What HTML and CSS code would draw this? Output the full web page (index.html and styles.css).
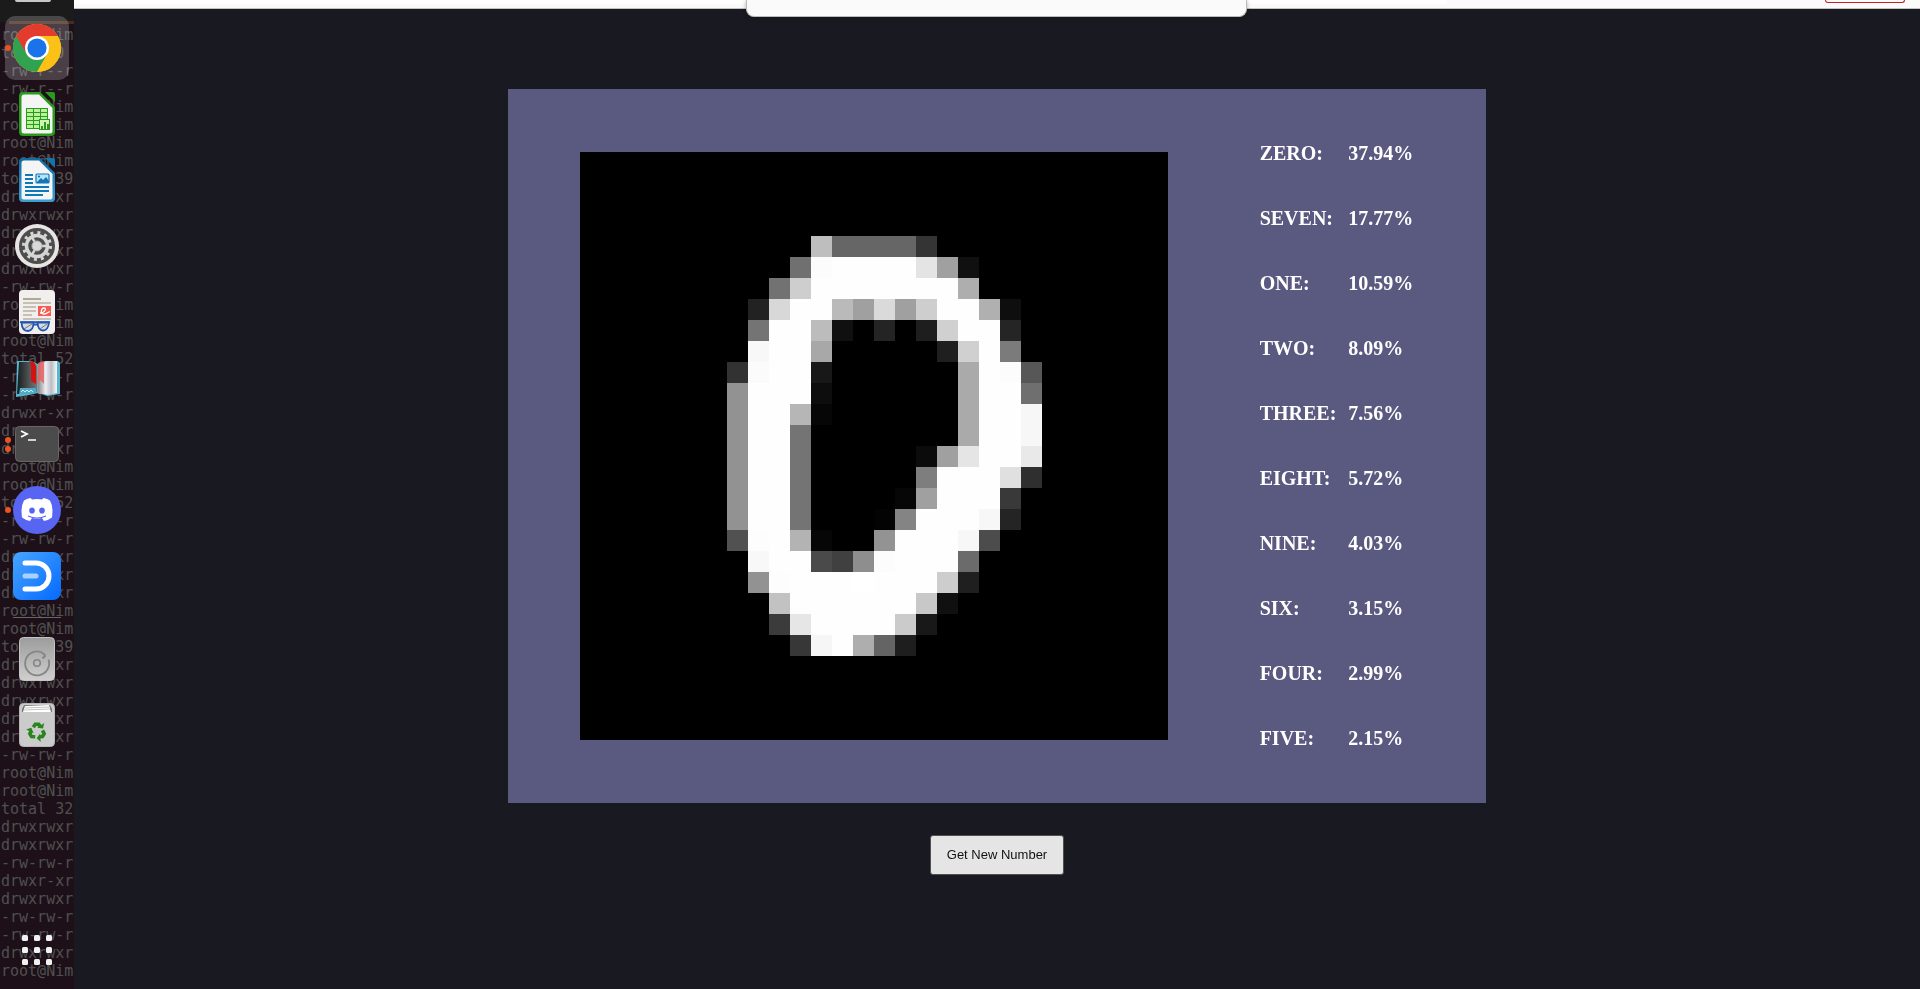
FILE: index.html
```html
<!DOCTYPE html>
<html lang="en">
<head>
<meta charset="utf-8">
<title>Digit Recognizer</title>
<link rel="stylesheet" href="styles.css">
</head>
<body>
<div class="desktop">
  <nav class="dock" aria-label="Dock">
<pre class="terminal" aria-hidden="true">root@Nim
total 0
-rw-r--r
-rw-r--r
root@Nim
root@Nim
root@Nim
root@Nim
total 39
drwxrwxr
drwxrwxr
drwxrwxr
drwxrwxr
drwxrwxr
-rw-rw-r
root@Nim
root@Nim
root@Nim
total 52
-rw-rw-r
-rw-rw-r
drwxr-xr
drwxr-xr
drwxr-xr
root@Nim
root@Nim
total 52
-rw-rw-r
-rw-rw-r
drwxrwxr
drwxrwxr
drwxrwxr
root@Nim
root@Nim
total 39
drwxrwxr
drwxrwxr
drwxrwxr
drwxrwxr
drwxrwxr
-rw-rw-r
root@Nim
root@Nim
total 32
drwxrwxr
drwxrwxr
-rw-rw-r
drwxr-xr
drwxrwxr
-rw-rw-r
-rw-rw-r
drwxrwxr
root@Nim</pre>
    <div class="dock-items">
      <button class="app active" aria-label="Chrome">
        <svg viewBox="0 0 48 48"><circle cx="24" cy="24" r="24" fill="#fbc116"/><path d="M24 24 3.2 12A24 24 0 0 0 24 48L34.4 30z" fill="#31a350"/><path d="M24 24L13.6 30 3.2 12A24 24 0 0 1 44.8 12H24z" fill="#e33b2e"/><path d="M24 12h20.8A24 24 0 0 1 24 48l10.4-18z" fill="#fbc116"/><circle cx="24" cy="24" r="12" fill="#fff"/><circle cx="24" cy="24" r="9.6" fill="#1a73e8"/></svg>
        <span class="dots"><i></i></span>
      </button>
      <button class="app" aria-label="Calc">
        <svg viewBox="0 0 48 48"><path d="M10 2h17l15 15v25a4 4 0 0 1-4 4H10a4 4 0 0 1-4-4V6a4 4 0 0 1 4-4z" fill="#2a9a1c"/><path d="M32 2h8a2 2 0 0 1 2 2v8z" fill="#2a9a1c"/><path d="M11 4.500h15L39.500 18v23a2.500 2.500 0 0 1-2.500 2.500H11A2.500 2.500 0 0 1 8.500 41V7A2.500 2.500 0 0 1 11 4.500z" fill="#f5f5f5"/><path d="M13 18h22v21H13z" fill="#2a9a1c"/><path d="M14 19h6v3h-6zm7 0h6v3h-6zm7 0h6v3h-6zM14 23h6v3h-6zm7 0h6v3h-6zm7 0h6v3h-6zM14 27h6v3h-6zm7 0h6v3h-6zm7 0h6v3h-6zM14 31h6v3h-6zm7 0h6v3h-6zM14 35h6v3h-6zm7 0h6v3h-6z" fill="#b8f29a"/><rect x="26.500" y="29.500" width="10" height="10" fill="#ccf4b4" stroke="#2a9a1c"/><path d="M28 36h2v3h-2zm3-4h2v7h-2zm3 2h2v5h-2z" fill="#2a9a1c"/></svg>
      </button>
      <button class="app" aria-label="Writer">
        <svg viewBox="0 0 48 48"><defs><linearGradient id="writer" x2="0" y2="1"><stop stop-color="#106ba3"/><stop offset="1" stop-color="#3a9fd4"/></linearGradient></defs><path d="M10 2h17l15 15v25a4 4 0 0 1-4 4H10a4 4 0 0 1-4-4V6a4 4 0 0 1 4-4z" fill="url(#writer)"/><path d="M32 2h8a2 2 0 0 1 2 2v8z" fill="#1473aa"/><path d="M11 4.500h15L39.500 18v23a2.500 2.500 0 0 1-2.500 2.500H11A2.500 2.500 0 0 1 8.500 41V7A2.500 2.500 0 0 1 11 4.500z" fill="#f5f5f5"/><path d="M12 18h8v2h-8zm0 4h8v2h-8zm0 4h8v2h-8zm0 4h24v2H12zm0 4h24v2H12zm0 4h18v2H12z" fill="#0f79b8"/><rect x="23" y="18" width="13" height="9" rx="1" fill="#b8e3fa" stroke="#0f79b8" stroke-width="1.200"/><path d="m24 26 4-4 2 2 3-3 3 4v2H24z" fill="#0f79b8"/><circle cx="26" cy="20.500" r="1.100" fill="#0f79b8"/></svg>
      </button>
      <button class="app" aria-label="Settings">
        <svg viewBox="0 0 48 48"><circle cx="24" cy="24" r="22" fill="#e6e5e3"/><circle cx="24" cy="24" r="18" fill="#4d4d4d"/><circle cx="24" cy="24" r="13.500" fill="none" stroke="#d6d6d6" stroke-width="3" stroke-dasharray="3 4.068"/><circle cx="24" cy="24" r="10.500" fill="none" stroke="#d6d6d6" stroke-width="3.500"/><path d="M24 24h10M24 24l-5-8.700M24 24l-5 8.700" stroke="#d6d6d6" stroke-width="2.500"/><circle cx="24" cy="24" r="5" fill="#d9d9d9" stroke="#b5b5b5"/></svg>
      </button>
      <button class="app" aria-label="Document Viewer">
        <svg viewBox="0 0 48 48"><rect x="6" y="2" width="36" height="44" rx="4" fill="#f0efed"/><path d="M10 10h18v2H10z" fill="#b1a897"/><path d="M10 14h28v2H10zm0 4h13v2H10zm0 4h13v2H10zm0 4h9v2h-9zm0 4h28v2H10z" fill="#c8c1b3"/><rect x="25" y="18" width="13" height="10" fill="#f55b50"/><path d="M27 25c5 0 7-5 4-5s-4 6 0 6 4-3 6-2" fill="none" stroke="#fff" stroke-width="1.300"/><path d="M8.500 34.500h12q0 8-5.500 8.500-6 0-6.500-8.500zm16 0h11.500q-1 8-6 8-5 0-5.500-8z" fill="#d6d9df" stroke="#1d56b5" stroke-width="1.800"/><path d="M7 34.200h30M20 36.500h5" stroke="#1d56b5" stroke-width="1.800"/><path d="m11 41 8-5m8 5 7-5" stroke="#777"/></svg>
      </button>
      <button class="app" aria-label="Dictionary">
        <svg viewBox="0 0 48 48"><defs><linearGradient id="page"><stop stop-color="#888"/><stop offset=".4" stop-color="#eceef2"/><stop offset=".7" stop-color="#bbbec5"/><stop offset="1" stop-color="#f8f8f8"/></linearGradient><linearGradient id="ink"><stop stop-color="#161c20"/><stop offset="1" stop-color="#777"/></linearGradient></defs><path d="M4 7h14l7 3 8-3h12l2 2v31l-13 2-9-3-9 2-13 2z" fill="#58b6ce"/><path d="M6 8h13l5 4v26l-8 1-12 1z" fill="url(#ink)"/><path d="M25 12q5-5 10-5h9v32l-9 2q-6-2-10-1z" fill="url(#page)"/><path d="M7 34h16v5l-17 2z" fill="#53aac5"/><path d="m8 38 2-2 2 2 2-2 2 2 2-2 2 2" fill="none" stroke="#c7f0fc"/><path d="M16 7q7 0 7 6v17l-5-3V14q0-5-2-7z" fill="#d31212"/><path d="M25 9q3-2 6-2v23l-4-4-3 5z" fill="#e86565" opacity=".85"/></svg>
      </button>
      <button class="app" aria-label="Terminal">
        <svg viewBox="0 0 48 48"><rect x="2.500" y="6.500" width="43" height="35" rx="4" fill="#4b4b4b" stroke="#666"/><path d="m8 11 6 3-6 3" fill="none" stroke="#fff" stroke-width="1.800"/><path d="M15 20h8" stroke="#fff" stroke-width="1.500"/></svg>
        <span class="dots"><i></i><i></i></span>
      </button>
      <button class="app" aria-label="Discord">
        <svg viewBox="0 0 48 48"><circle cx="24" cy="24" r="24" fill="#5865f2"/><path d="M19 13.500q5-1 10 0l1.500-1.500q4 .5 6.500 2.500 3.500 6 2 17-4 3-8 3.500l-2-3q-5 1.200-10 0l-2 3q-4-.5-8-3.500-1.500-11 2-17 2.500-2 6.500-2.500z" fill="#fff"/><ellipse cx="19" cy="24.500" rx="2.800" ry="3.100" fill="#5865f2"/><ellipse cx="29" cy="24.500" rx="2.800" ry="3.100" fill="#5865f2"/><path d="M15 30q9 4 18 0" fill="none" stroke="#5865f2" stroke-width="1.200"/></svg>
        <span class="dots"><i></i></span>
      </button>
      <button class="app" aria-label="EdrawMax">
        <svg viewBox="0 0 48 48"><defs><linearGradient id="blue" x2="1" y2="1"><stop stop-color="#47a5ff"/><stop offset="1" stop-color="#0569ff"/></linearGradient></defs><rect width="48" height="48" rx="8" fill="url(#blue)"/><path d="M12 11h11a13 13 0 0 1 0 26H12" fill="none" stroke="#fff" stroke-width="5" stroke-linecap="round"/><path d="M12 24h11" stroke="#a9d1ff" stroke-width="5" stroke-linecap="round"/></svg>
      </button>
      <hr class="divider">
      <button class="app" aria-label="Disk">
        <svg viewBox="0 0 48 48"><defs><linearGradient id="metal" x2="0" y2="1"><stop stop-color="#9c9c9c"/><stop offset="1" stop-color="#cfcfcf"/></linearGradient></defs><rect x="6.500" y="2.500" width="35" height="43" rx="4" fill="url(#metal)" stroke="#c4c4c4"/><path d="M29.500 23.500 32.500 20.500M28 17a12 12 0 1 0 7.500 7.500M28 17l4.500 3.500" fill="none" stroke="#858585" stroke-width="1.800"/><circle cx="24" cy="28" r="3.300" fill="none" stroke="#858585" stroke-width="1.600"/></svg>
      </button>
      <button class="app" aria-label="Trash">
        <svg viewBox="0 0 48 48"><rect x="6.500" y="2.500" width="35" height="43" rx="4" fill="#cbcbcb" stroke="#b6b6b6"/><path d="M11 4h26l2 4v3H9V8z" fill="#777"/><path d="m12 5 24-1 2 7H10z" fill="#fff"/><path d="m12 7 24-1M11 9l26-1" stroke="#aaa" stroke-width=".7"/><defs><g id="arrow"><path d="M20.300 26.300 22.300 23.200H25.700L27.200 25.500" fill="none" stroke="#28851f" stroke-width="3.600"/><path d="m24.200 26.800 5.800.6 1.200-5.300z" fill="#28851f"/></g></defs><use href="#arrow"/><use href="#arrow" transform="rotate(120 24 30.500)"/><use href="#arrow" transform="rotate(240 24 30.500)"/></svg>
      </button>
      <button class="app launcher" aria-label="Show Applications">
        <svg viewBox="0 0 48 48" fill="#f2f2f2"><rect x="9" y="9" width="6" height="6" rx="1.500"/><rect x="21" y="9" width="6" height="6" rx="1.500"/><rect x="33" y="9" width="6" height="6" rx="1.500"/><rect x="9" y="21" width="6" height="6" rx="1.500"/><rect x="21" y="21" width="6" height="6" rx="1.500"/><rect x="33" y="21" width="6" height="6" rx="1.500"/><rect x="9" y="33" width="6" height="6" rx="1.500"/><rect x="21" y="33" width="6" height="6" rx="1.500"/><rect x="33" y="33" width="6" height="6" rx="1.500"/></svg>
      </button>
    </div>
  </nav>
  <div class="browser">
    <header class="toolbar">
      <div class="address"></div>
      <div class="update"></div>
      <div class="popup"></div>
    </header>
    <main class="page">
      <section class="panel">
        <canvas class="digit" width="28" height="28" role="img" aria-label="Handwritten zero"></canvas>
        <table class="scores">
          <tbody>
            <tr><th scope="row">ZERO:</th><td>37.94%</td></tr>
            <tr><th scope="row">SEVEN:</th><td>17.77%</td></tr>
            <tr><th scope="row">ONE:</th><td>10.59%</td></tr>
            <tr><th scope="row">TWO:</th><td>8.09%</td></tr>
            <tr><th scope="row">THREE:</th><td>7.56%</td></tr>
            <tr><th scope="row">EIGHT:</th><td>5.72%</td></tr>
            <tr><th scope="row">NINE:</th><td>4.03%</td></tr>
            <tr><th scope="row">SIX:</th><td>3.15%</td></tr>
            <tr><th scope="row">FOUR:</th><td>2.99%</td></tr>
            <tr><th scope="row">FIVE:</th><td>2.15%</td></tr>
          </tbody>
        </table>
      </section>
      <button class="new-number">Get New Number</button>
    </main>
  </div>
</div>
<script src="digit.js"></script>
</body>
</html>
```

FILE: digit.js
```js
// Grey levels of the digit, columns 7 to 21, starting at row 4.
const FIRST_COLUMN = 7;
const FIRST_ROW = 4;
const rows = [
  "00 00 00 00 be 66 66 66 66 34 00 00 00 00 00",
  "00 00 00 70 fc fe fe fe fe e4 a0 10 00 00 00",
  "00 00 72 ce fe fe fe fe fe fe fe ae 00 00 00",
  "00 22 d8 fe fe ba a0 da a0 ce fe fe b0 0e 00",
  "00 74 fe fe bc 10 00 24 00 1e d0 fe fe 25 00",
  "00 f8 fe fe a8 00 00 00 00 00 1f d0 fe 7b 00",
  "32 fb fe fe 18 00 00 00 00 00 00 aa fe fc 57",
  "92 fe fe fe 0d 00 00 00 00 00 00 aa fe fe 6f",
  "92 fe fe b6 06 00 00 00 00 00 00 aa fe fe f7",
  "92 fe fe 74 00 00 00 00 00 00 00 aa fe fe f7",
  "92 fe fe 74 00 00 00 00 00 0b a0 e5 fe fe e9",
  "92 fe fe 74 00 00 00 00 00 7e fe fe fe e0 2f",
  "92 fe fe 74 00 00 00 00 06 a0 fe fe fe 39 00",
  "92 fe fe 74 00 00 00 03 84 fe fe fe f7 24 00",
  "51 fd fe b3 06 00 00 93 fe fe fe f7 4c 00 00",
  "00 f8 fe fe 4a 40 8e fc fe fe fe 6b 00 00 00",
  "00 92 fd fe fe fe ff fe fe fe cd 1f 00 00 00",
  "00 00 c2 fe fe fe fe fe fe c8 10 00 00 00 00",
  "00 00 3b e6 fe fe fe fe cb 18 00 00 00 00 00",
  "00 00 00 37 f6 fe ae 64 1e 00 00 00 00 00 00"
];

const context = document.querySelector(".digit").getContext("2d");
rows.forEach((row, y) => {
  row.split(" ").forEach((level, x) => {
    context.fillStyle = "#" + level.repeat(3);
    context.fillRect(x + FIRST_COLUMN, y + FIRST_ROW, 1, 1);
  });
});
```

FILE: styles.css
```css
* {
  box-sizing: border-box;
}

body {
  margin: 0;
  background: #191921;
}

.desktop {
  display: flex;
  min-height: 100vh;
}

.dock {
  position: relative;
  flex: 0 0 74px;
  padding-top: 15px;
  overflow: hidden;
  background: linear-gradient(#1b1b1b 22px, #1d1019 22px);
}

/* The top window edges that show through the dock */
.dock::before {
  content: "";
  position: absolute;
  top: 21px;
  left: 9px;
  right: 0;
  height: 3px;
  background: #4b2b20;
}

.dock::after {
  content: "";
  position: absolute;
  top: 0;
  left: 15px;
  width: 36px;
  height: 2px;
  border-radius: 0 0 4px 4px;
  background: #c8c8c8;
}

.terminal {
  position: absolute;
  top: 26px;
  left: 1px;
  margin: 0;
  color: #505050;
  font: 15px/18px "DejaVu Sans Mono", monospace;
}

.dock-items {
  position: relative;
  display: flex;
  flex-direction: column;
  height: 100%;
}

.app {
  position: relative;
  display: grid;
  place-items: center;
  flex: none;
  height: 64px;
  width: 64px;
  margin: 1px 5px;
  padding: 0;
  border: 0;
  border-radius: 10px;
  background: none;
}

.app.active {
  background: rgba(255, 255, 255, 0.2);
}

.app svg {
  display: block;
  width: 48px;
  height: 48px;
}

.dots {
  position: absolute;
  left: 0;
  top: 0;
  height: 100%;
  display: flex;
  flex-direction: column;
  justify-content: center;
  gap: 3px;
}

.dots i {
  width: 6px;
  height: 6px;
  border-radius: 50%;
  background: #e95420;
}

.divider {
  width: 48px;
  height: 1px;
  margin: 8px 13px;
  border: 0;
  background: #666;
}

.launcher {
  margin-top: auto;
  margin-bottom: 7px;
}

.browser {
  flex: 1;
  display: flex;
  flex-direction: column;
  min-width: 0;
}

.toolbar {
  position: relative;
  display: flex;
  justify-content: space-between;
  height: 9px;
  padding-right: 15px;
  border-bottom: 1px solid #c4c1bd;
  background: #fafafa;
}

.address {
  width: 75%;
  height: 4px;
  border-radius: 0 0 8px 0;
  background: #fff;
}

.update {
  width: 80px;
  height: 3px;
  border: solid #c5221f;
  border-width: 0 1px 1px;
  border-radius: 0 0 8px 8px;
}

.popup {
  position: absolute;
  top: 0;
  left: 50%;
  width: 501px;
  height: 17px;
  margin-left: -251px;
  border: 1px solid #bbb;
  border-top: 0;
  border-radius: 0 0 8px 8px;
  background: #fafafa;
  box-shadow: 0 1px 4px rgba(0, 0, 0, 0.3);
}

.page {
  flex: 1;
  display: flex;
  flex-direction: column;
  align-items: center;
  gap: 32px;
  padding-top: 80px;
}

.panel {
  display: flex;
  align-items: center;
  gap: 92px;
  padding: 32px 71px 32px 72px;
  background: #5a5980;
}

.digit {
  width: 588px;
  height: 588px;
  background: #000;
  image-rendering: pixelated;
}

.scores {
  border-collapse: collapse;
  color: #fff;
  font: bold 20px/23px "Liberation Serif", serif;
  text-align: left;
}

.scores tr {
  height: 65px;
}

.scores th {
  min-width: 88px;
  padding: 0 12px 0 0;
}

.scores td {
  min-width: 67px;
  padding: 0;
}

.new-number {
  height: 40px;
  padding: 0 16px;
  border: 1px solid #505050;
  border-radius: 3px;
  background: #e5e5e5;
  color: #111;
  font: 13px/16px "Liberation Sans", sans-serif;
}
```
